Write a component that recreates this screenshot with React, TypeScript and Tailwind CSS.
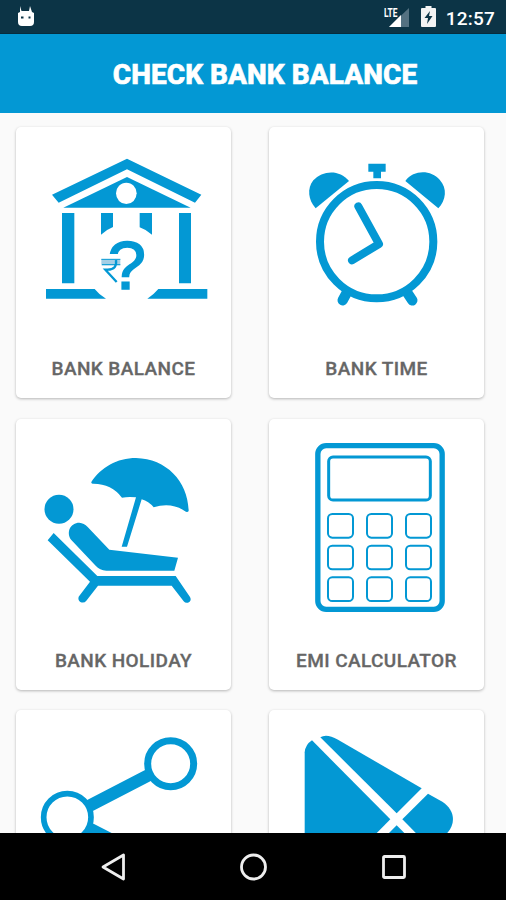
import type { ReactNode } from "react";

function Artwork({ viewBox, children }: { viewBox: string; children: ReactNode }) {
  return (
    <svg viewBox={viewBox} className="block h-[210px] w-[214px] shrink-0 fill-[#0398d4]">
      {children}
    </svg>
  );
}

function BankIcon() {
  return (
    <Artwork viewBox="-42 -39 642 630">
      <path d="M66 164 291 56 514 164 495 188 291 88 86 188Z" />
      <path d="M100 203 291 111 482 203Z" />
      <ellipse cx="289" cy="160" rx="31" ry="32" fill="white" />
      <path d="M96 219h37v211H96ZM447 219h36v211h-36Z" />
      <path d="M213 219h36v42q-20 8-36 23ZM329 219h37v65q-15-14-37-22Z" />
      <path d="M48 447h146q13 17 34 29H48ZM385 447h147v29H352q19-12 33-29Z" />
      <text x="290" y="448" textAnchor="middle" fontSize="207" fontFamily="Liberation Sans, Arial, sans-serif" stroke="#0398d4" strokeWidth="5">?</text>
      <path d="M212 342h61v82h-61Z" fill="white" />
      <g fill="none" stroke="#0398d4">
        <path d="M214 367h57" stroke="#a5cfe5" strokeWidth="18" />
        <path d="M214 358h57M216 374h55" strokeWidth="3" />
        <path d="M258 360q4 29-25 29h-7l34 37" strokeWidth="7" />
      </g>
    </Artwork>
  );
}

function ClockIcon() {
  return (
    <Artwork viewBox="-63 -69 642 630">
      <path
        d="M176 418 158 451M345 418 367 451"
        stroke="#0398d4"
        strokeWidth="31"
        strokeLinecap="round"
      />
      <circle cx="260" cy="275" r="170" fill="white" stroke="#0398d4" strokeWidth="24" />
      <path d="M235 41h52v24h-14v20h-23V65h-15Z" />
      <path d="M77 175C55 151 50 115 70 91C96 62 147 56 177 93Z" />
      <path d="M445 175C468 151 473 115 449 89C424 61 373 57 346 93Z" />
      <path
        d="M205 169 267 282 186 331"
        fill="none"
        stroke="#0398d4"
        strokeWidth="24"
        strokeLinecap="round"
        strokeLinejoin="round"
      />
    </Artwork>
  );
}

function HolidayIcon() {
  return (
    <Artwork viewBox="-42 -63 642 630">
      <circle cx="87" cy="208" r="43.5" />
      <path d="M184 126C213 82 261 54 318 54C410 56 474 125 476 213Q472 219 464 213Q423 186 371 202Q356 184 335 178L291 320H275L318 172Q296 169 276 173Q244 130 188 131Q183 130 184 126Z" />
      <path d="M124 300C107 277 121 248 148 248Q162 249 173 261L238 329 444 353 433 392H229Q209 390 197 377Z" />
      <path d="M53 301 71 279 202 408H437L480 471Q485 480 478 486Q468 492 461 484L425 437H204L169 482Q162 491 151 486Q143 480 146 470L180 425Z" />
    </Artwork>
  );
}

function CalculatorIcon() {
  return (
    <Artwork viewBox="-93 -33 642 630">
      <g fill="none" stroke="#0398d4">
        <rect x="53.5" y="47" width="373" height="491" rx="25" strokeWidth="16" />
        <rect x="86" y="81" width="305" height="129" rx="13" strokeWidth="9" />
        {[252, 347, 442].map((y) =>
          [84, 201, 318].map((x) => (
            <rect key={`${x}-${y}`} x={x} y={y} width="75" height="71" rx="13" strokeWidth="6" />
          ))
        )}
      </g>
    </Artwork>
  );
}

function ShareIcon() {
  return (
    <Artwork viewBox="48 60 642 630">
      <path d="M202 382 512 221M202 382 512 540" fill="none" stroke="#0398d4" strokeWidth="37" />
      <g fill="white" stroke="#0398d4">
        <circle cx="512" cy="221" r="69" strokeWidth="21" />
        <circle cx="202" cy="382" r="71" strokeWidth="17" />
        <circle cx="512" cy="540" r="69" strokeWidth="21" />
      </g>
    </Artwork>
  );
}

function PlayStoreIcon() {
  return (
    <Artwork viewBox="48 60 642 630">
      <path d="M155 187Q157 164 177 151L412 388 177 625Q157 612 155 588Z" />
      <path d="M202 142Q220 129 255 149L506 295 431 370Z" />
      <path d="M525 311 568 335C609 361 612 411 568 442L525 466 448 388Z" />
      <path d="M431 406 506 481 255 626Q220 645 202 635Z" />
    </Artwork>
  );
}

const menuItems = [
  { id: "balance", label: "BANK BALANCE", icon: <BankIcon /> },
  { id: "time", label: "BANK TIME", icon: <ClockIcon /> },
  { id: "holiday", label: "BANK HOLIDAY", icon: <HolidayIcon /> },
  { id: "emi", label: "EMI CALCULATOR", icon: <CalculatorIcon /> },
  { id: "share", icon: <ShareIcon /> },
  { id: "rate", icon: <PlayStoreIcon /> },
];

function StatusBar() {
  return (
    <div className="flex h-[34px] shrink-0 items-center justify-between border-b border-[#062c3d] bg-[#0c3446] pr-[11px] pl-[17px] text-white">
      <svg viewBox="0 0 18 21" className="h-[21px] w-[18px]">
        <path d="M3 0l1.500 5h7.500l1-5 2 6 2 1v9q0 4-4 4H5q-4 0-4-4V7l2-1Z" fill="white" />
        <path d="M4 11.500h2.500M11.500 11.500h2" stroke="#0c3446" strokeWidth="2" />
      </svg>
      <div className="flex items-center">
        <svg viewBox="0 0 26 22" className="mr-[11px] h-[22px] w-[26px]">
          <path d="M25 2v19H5Z" fill="#547181" />
          <path d="M17 9v12H5Z" fill="white" />
          <text x="0" y="10.500" fontSize="12.500" fontWeight="700" fontFamily="Roboto, sans-serif" textLength="13.500" lengthAdjust="spacingAndGlyphs" fill="white" stroke="#0c3446" strokeWidth="1" paintOrder="stroke">LTE</text>
        </svg>
        <svg viewBox="0 0 15 22" className="mr-[10px] h-[22px] w-[15px]">
          <path d="M4.5 0h6v2H14q1 0 1 1v17q0 1-1 1H1q-1 0-1-1V3q0-1 1-1h3.500Z" fill="#f3f3f3" />
          <path d="M9 5 3.500 12H7l-1 6 5.500-8H8Z" fill="#0c3446" />
        </svg>
        <span className="pt-[3px] text-[19px] leading-none font-medium tracking-[0.2px]">12:57</span>
      </div>
    </div>
  );
}

function NavigationBar() {
  return (
    <div className="flex h-[67px] shrink-0 items-center justify-between bg-black pr-[100px] pl-[100px]">
      <svg viewBox="0 0 25 28" className="h-7 w-[25px]">
        <path d="M23.500 2v24L3 14Z" fill="none" stroke="#eee" strokeWidth="2.800" strokeLinejoin="round" />
      </svg>
      <svg viewBox="0 0 28 28" className="size-7">
        <circle cx="13.500" cy="14" r="12" fill="none" stroke="#eee" strokeWidth="2.800" />
      </svg>
      <svg viewBox="0 0 24 24" className="size-6">
        <rect x="1.500" y="1.500" width="21" height="21" rx="1" fill="none" stroke="#eee" strokeWidth="2.800" />
      </svg>
    </div>
  );
}

export default function App() {
  return (
    <div className="flex h-[900px] w-[506px] flex-col overflow-hidden bg-[#fafafa] font-[Roboto,sans-serif]">
      <StatusBar />
      <header className="flex h-[79px] shrink-0 items-center justify-center bg-[#0398d4] pt-[2px] pl-6">
        <h1 className="text-[28px] font-extrabold tracking-[0.05px] whitespace-nowrap text-white [-webkit-text-stroke:0.6px_white]">
          CHECK BANK BALANCE
        </h1>
      </header>
      <main className="min-h-0 flex-1 overflow-hidden px-4 pt-[14px]">
        <div className="grid grid-cols-[215px_215px] gap-x-[38px] gap-y-[20.500px]">
          {menuItems.map((item) => (
            <section key={item.id} className="flex h-[271px] flex-col rounded-[5px] bg-white shadow-[0_1px_3px_rgba(0,0,0,0.28)]">
              {item.icon}
              {item.label && (
                <h2 className="mt-[18px] text-center text-[19px] leading-[28px] font-medium tracking-[0.4px] whitespace-nowrap text-[#666] [-webkit-text-stroke:0.3px_#666]">
                  {item.label}
                </h2>
              )}
            </section>
          ))}
        </div>
      </main>
      <NavigationBar />
    </div>
  );
}
